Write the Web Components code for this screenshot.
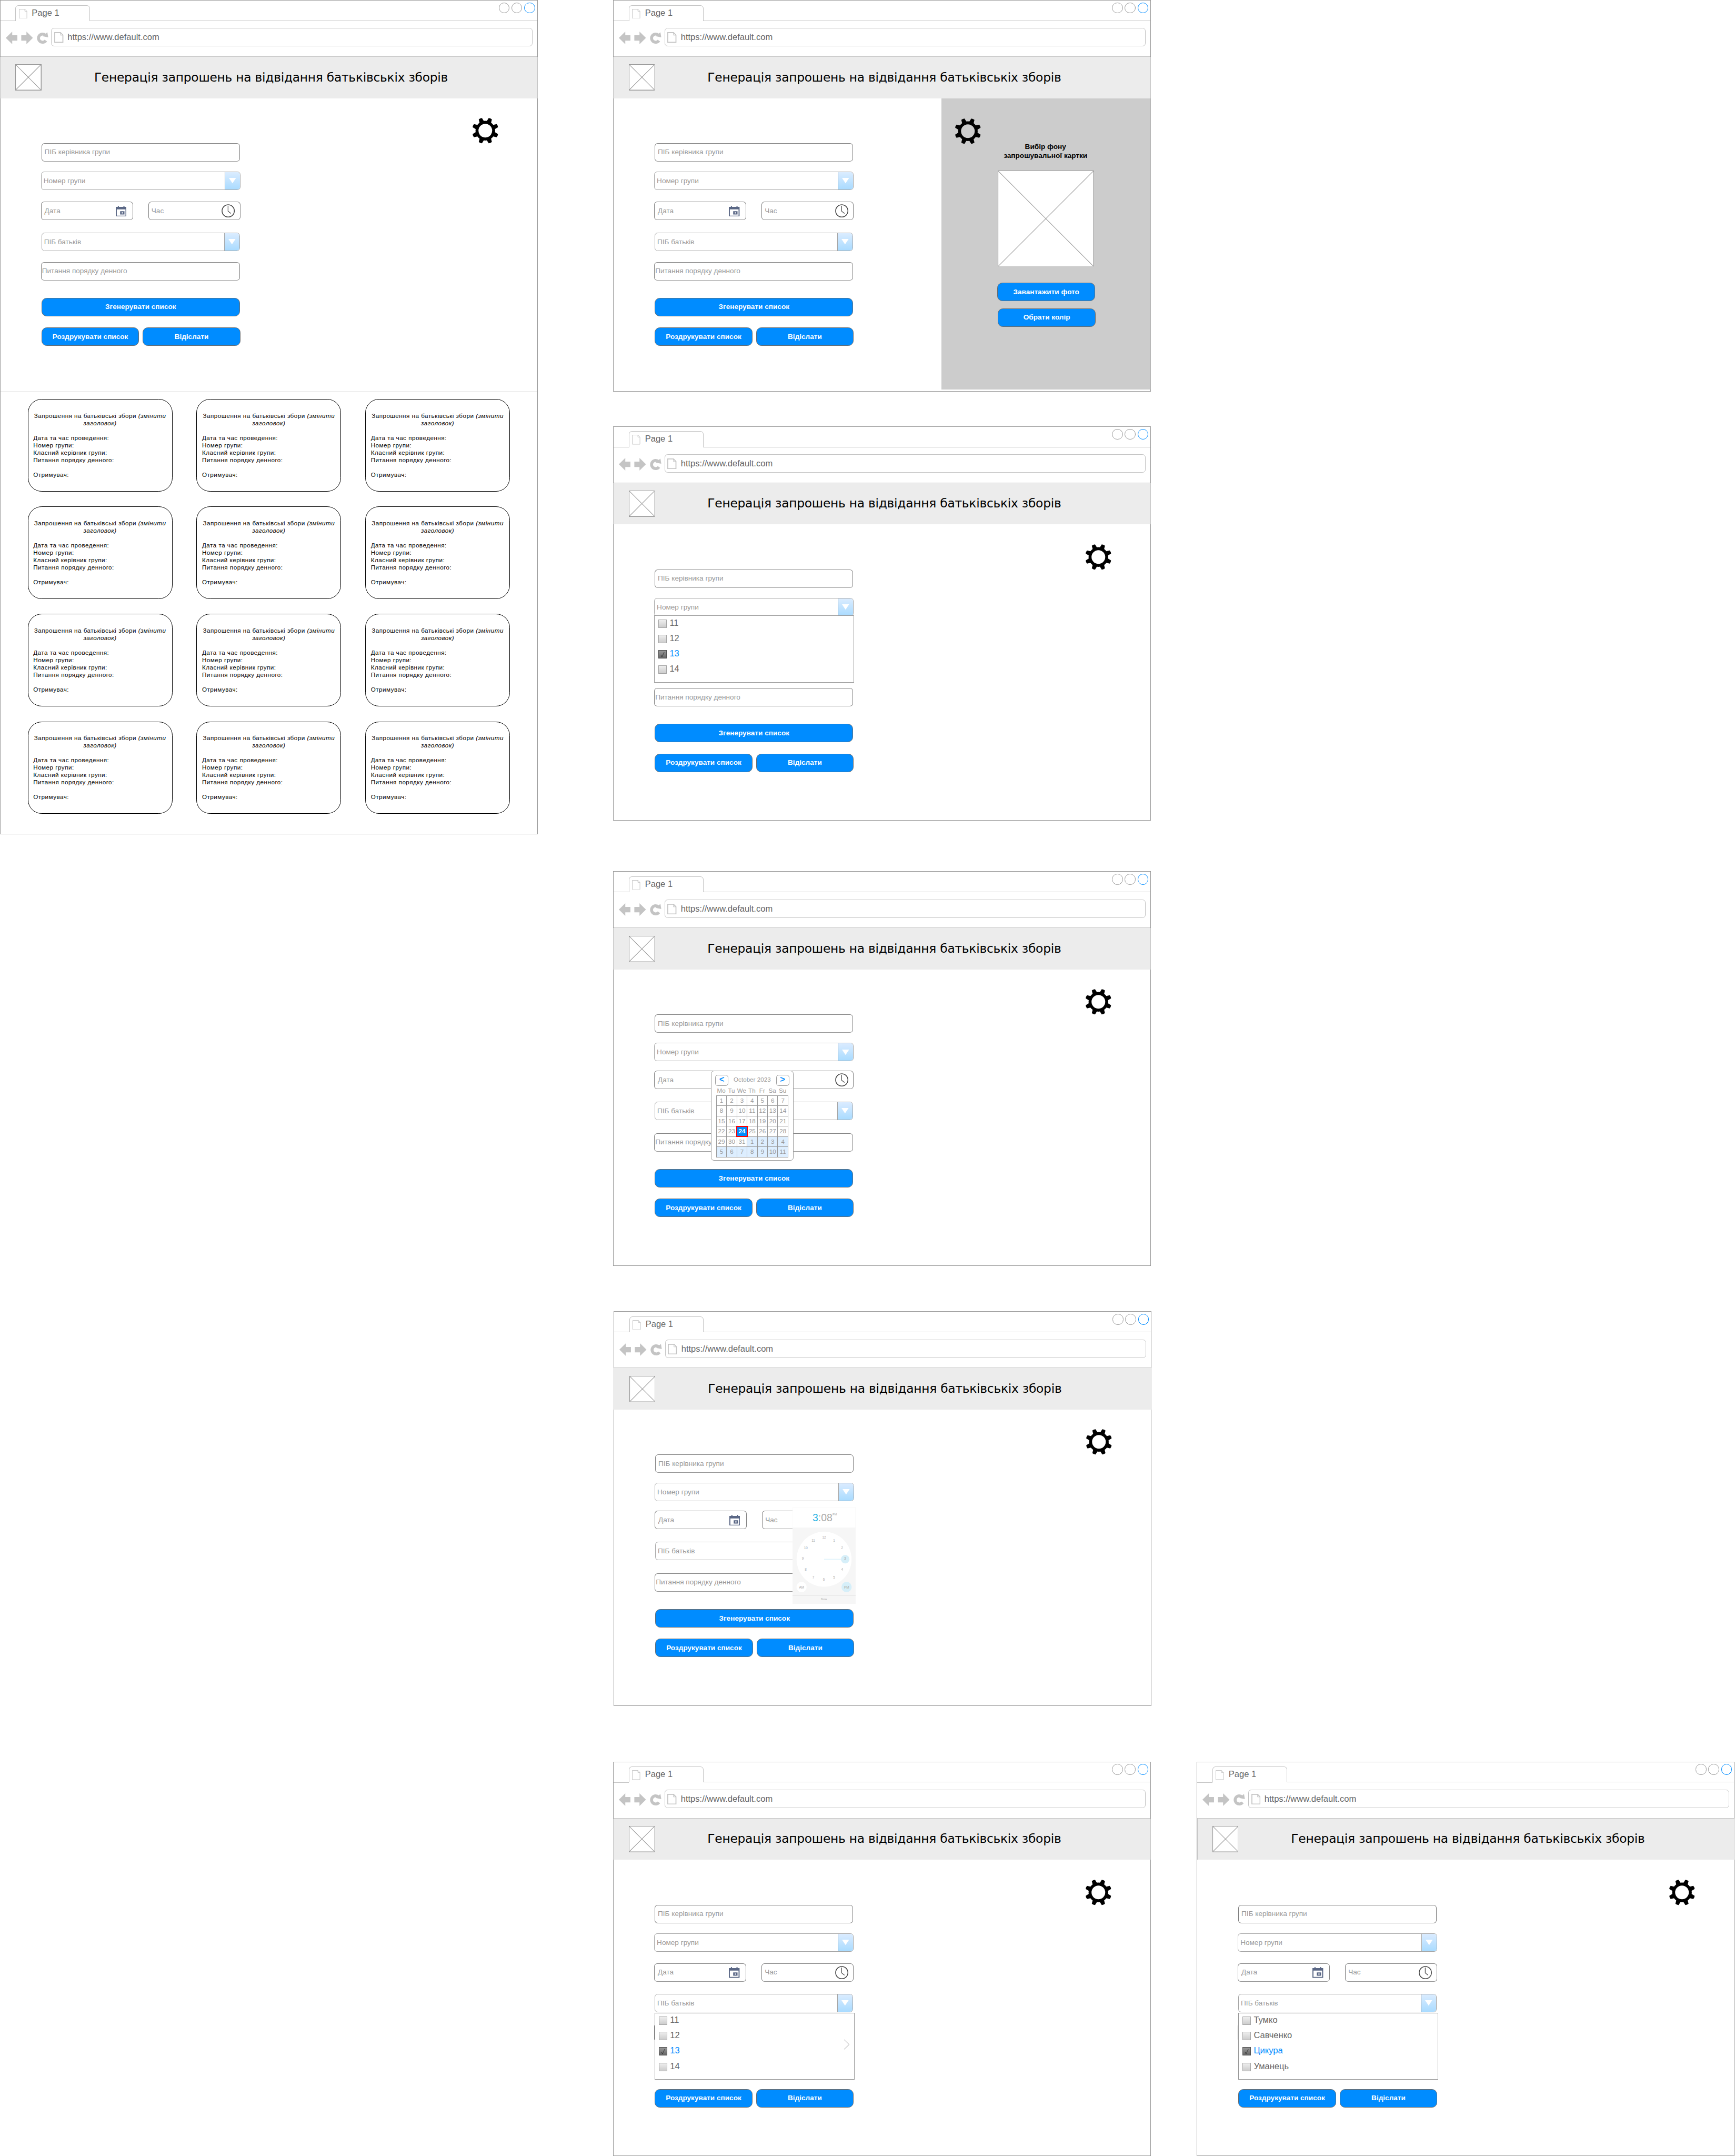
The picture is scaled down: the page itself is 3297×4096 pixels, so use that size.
<!DOCTYPE html>
<html lang="uk">
<head>
<meta charset="utf-8">
<title>Генерація запрошень</title>
<style>
html,body{margin:0;padding:0;background:#fff;overflow:hidden}
wire-board{zoom:.972}
</style>
</head>
<body>
<wire-board></wire-board>
<script>
const def=(name,render)=>customElements.define(name,class extends HTMLElement{
  connectedCallback(){
    if(this.shadowRoot)return;
    this.attachShadow({mode:'open'}).innerHTML=render(this);
  }
});
const BASE='*{box-sizing:border-box}:host{box-sizing:border-box;font-family:"Liberation Sans",Arial,sans-serif}';

/* crossed placeholder picture */
def('image-stub',el=>`<style>${BASE}
:host{display:block;width:${el.getAttribute('size')}px;height:${el.getAttribute('size')}px;flex:none}
svg{display:block;width:100%;height:100%}</style>
<svg viewBox="0 0 100 100" preserveAspectRatio="none"><rect width="100" height="100" fill="#fff"/><g fill="none" stroke="#999" stroke-width="1.1"><path vector-effect="non-scaling-stroke" d="M0 0L100 100M100 0L0 100"/></g><rect width="100" height="100" fill="none" stroke="#999" stroke-width="2.2" vector-effect="non-scaling-stroke"/></svg>`);

def('gear-icon',()=>{
  const teeth=[22.5,67.5,112.5,157.5,202.5,247.5,292.5,337.5].map(a=>`<path transform="rotate(${a})" d="M-4.6 -17.5L-3.4 -25.4Q0 -26.6 3.4 -25.4L4.6 -17.5Z"/>`).join('');
  return `<style>:host{display:block;width:54px;height:54px}svg{display:block}</style>
<svg width="54" height="54" viewBox="-27 -27 54 54"><circle r="16.3" fill="none" stroke="#000" stroke-width="5.8"/>${teeth}</svg>`;
});

/* browser window */
def('mock-window',el=>`<style>${BASE}
:host{display:flex;flex-direction:column;width:1051px;height:${el.getAttribute('height')}px;border:1px solid #999;background:#fff;position:absolute;left:${el.getAttribute('x')}px;top:${el.getAttribute('y')}px;color:#666}
.strip{display:flex;align-items:flex-end;height:40px;flex:none}
.lead{width:29px;height:1px;background:#c4c4c4}
.tab{width:146px;height:31px;border:1px solid #c4c4c4;border-bottom:0;border-radius:6px 6px 0 0;display:flex;padding:6px 0 0 6px;gap:9px;font-size:17px;line-height:19px}
.tab span{margin-top:-1px}
.rest{flex:1;height:40px;border-bottom:1px solid #c4c4c4;display:flex;justify-content:flex-end;gap:4px;padding:4px 4px 0 0}
.rest i{width:21px;height:21px;border:1px solid #999;border-radius:50%}
.rest i:last-child{border-color:#008cff}
.tools{height:70px;flex:none;border-bottom:1px solid #c4c4c4;display:flex;padding:14px 9px 0 9px}
.tools>svg{flex:none;display:block}
.url{flex:1;height:36px;border:1px solid #c4c4c4;border-radius:6px;display:flex;padding:7px 0 0 5px;gap:8px;font-size:17px;line-height:20px}
.head{height:81px;flex:none;margin:0 -1px;border:solid #c4c4c4;border-width:0 1px;background:#ececec;display:flex;align-items:center;padding-left:29px;color:#000}
.head span{font:24px/30px "DejaVu Sans",sans-serif;margin:-2px 0 0 103px;white-space:nowrap;letter-spacing:-.24px}
.body{flex:1;display:flex;flex-direction:column;position:relative;min-height:0}
</style>
<div class="strip"><div class="lead"></div><div class="tab"><svg width="16" height="19" viewBox="0 0 16 19" fill="none" stroke="#c4c4c4"><path d="M.5.5H11.5L15.5 4.5V18.5H.5ZM11.5.5V4.5H15.5"/></svg><span>Page 1</span></div><div class="rest"><i></i><i></i><i></i></div></div>
<div class="tools"><svg width="90" height="36" viewBox="10 55 90 36" fill="#c4c4c4"><path d="M11 74.5L23.6 62.3V69.3H33.6V80H23.6V86.8ZM64 74.5L51.4 62.3V69.3H41.3V80H51.4V86.8Z"/><path fill="none" stroke="#c4c4c4" stroke-width="5.8" d="M88.6 69.4A8 8 0 1 0 89.4 79.8"/><path d="M92.3 63.5L94 73.6L82.8 71.3Z"/></svg>
<div class="url"><svg width="18" height="21" viewBox="0 0 18 21" fill="none" stroke="#c4c4c4" stroke-width="1.8"><path d="M1 1H12.2L17 5.8V20H1Z"/><path stroke-width="1" d="M12 1.5V6H16.5"/></svg><span>https://www.default.com</span></div></div>
<div class="head"><image-stub size="51"></image-stub><span>Генерація запрошень на відвідання батьківськіх зборів</span></div>
<div class="body"><slot></slot></div>`);

def('text-field',el=>{
  const icon={
    date:'<svg width="21" height="21" viewBox="0 0 21 21"><path fill="#5a6785" d="M0 2H4V0H6V2H15V0H17V2H21V21H0ZM2 7V19.2H19V7Z" fill-rule="evenodd"/><path fill="#5a6785" fill-rule="evenodd" d="M8.5 10.5H17V17H8.5ZM11.6 12.5V15H14V12.5Z"/></svg>',
    time:'<svg width="26" height="26" viewBox="-13 -13 26 26" fill="none" stroke="#444"><circle r="12" stroke-width="1.6"/><path stroke-width="1.2" d="M-.3 -10V.5L5.3 5"/></svg>'
  }[el.getAttribute('icon')]||'';
  return `<style>${BASE}
:host{display:flex;align-items:center;justify-content:space-between;height:36px;border:1px solid #808080;border-bottom-color:#999;border-radius:6px;background:#fff;font-size:14px;line-height:16px;color:#999;padding:0 9.5px 0 var(--pad,5px);white-space:nowrap}
span{margin-top:-1px}
svg{display:block}</style><span><slot></slot></span>${icon}`;
});

def('select-field',()=>`<style>${BASE}
:host{display:flex;align-items:stretch;justify-content:space-between;height:36px;border:1px solid #a6a6a6;border-radius:6px;background:#fff;font-size:14px;line-height:34px;color:#999;padding-left:var(--pad,4px);overflow:hidden;white-space:nowrap}
.b{width:30px;border-left:1px solid #a6a6a6;background:linear-gradient(#dbecff,#a9dbff);display:flex;align-items:center;justify-content:center}</style>
<slot></slot><div class="b"><svg width="14" height="11" viewBox="0 0 14 11"><path fill="#fff" d="M0 0H14L7 10.5Z"/></svg></div>`);

def('blue-button',()=>`<style>${BASE}
:host{display:flex;align-items:center;justify-content:center;height:36px;border:1px solid #6b6b6b;border-radius:10px;background:#008cff;color:#fff;font-size:14px;font-weight:bold;line-height:16px;white-space:nowrap}</style><slot></slot>`);

/* state: which overlay is open; what it fully covers is not painted */
def('invite-form',el=>{
  const state=el.getAttribute('state');
  const agenda={date:'Питання порядку',parents:''}[state]??'Питання порядку денного';
  return `<style>${BASE}
:host{display:flex;flex-direction:column;margin:88px 0 0 79px;width:391px;flex:none}
:host([state=date]),:host([state=time]){--g3:18.5px;--g5:26px}
:host([state=group]) .r3,:host([state=group]) .f4,:host([state=parents]) .gen{visibility:hidden}
.i{margin-left:1px;width:388px}
.s{width:390px}
.f5{width:389px}
.r{display:flex;width:390px;justify-content:space-between}
.r text-field{width:180px}
.bt{margin:22px 0 0 1px;width:389px}
.bt blue-button{width:191px}</style>
<text-field class="i">ПІБ керівника групи</text-field>
<select-field class="s" style="margin-top:19.5px">Номер групи</select-field>
<div class="r r3" style="margin-top:var(--g3,23px)"><text-field icon="date" style="--pad:6px;padding-right:12px">Дата</text-field><text-field icon="time">${state=='date'?'':'Час'}</text-field></div>
<select-field class="i f4" style="margin-top:24px">ПІБ батьків</select-field>
<text-field class="f5" style="margin-top:var(--g5,21.5px);--pad:1px">${agenda}</text-field>
<blue-button class="i gen" style="margin-top:34px">Згенерувати список</blue-button>
<div class="r bt"><blue-button>Роздрукувати список</blue-button><blue-button>Відіслати</blue-button></div>`;
});

def('check-list',el=>{
  const items=el.getAttribute('items').split(',');
  return `<style>${BASE}
:host{display:flex;flex-direction:column;gap:14px;position:absolute;width:391px;height:131px;border:1px solid #999;background:#fff;padding:6.5px 0 0 7px;font-size:17px;line-height:16px;color:#666}
.row{display:flex;gap:6px;height:16px}
.row i{width:16px;height:16.5px;border:1px solid #a3a3a3;background:linear-gradient(#eee,#ccc);flex:none}
.row span{margin-top:-1px}
.on{color:#008cff}
.on i{border-color:#4d4d4d;background:linear-gradient(#999,#666)}
.on svg{display:block}
.chev{position:absolute;right:9px;top:51px}</style>
${items.map((t,n)=>`<div class="row ${n==2?'on':''}"><i>${n==2?'<svg width="14" height="15" viewBox="0 0 14 15"><path fill="none" stroke="#333" d="M4 8.5L6 12.5L10.5 3"/></svg>':''}</i><span>${t}</span></div>`).join('')}
${el.hasAttribute('more')?'<svg class="chev" width="12" height="21" viewBox="0 0 12 21"><path fill="none" stroke="#c4c4c4" stroke-width="1.1" d="M1 1L11 10.5L1 20"/></svg>':''}`;
});

def('month-popup',()=>{
  const d=[];for(let n=1;n<=31;n++)d.push(n);for(let n=1;n<=11;n++)d.push(n);
  return `<style>${BASE}
:host{display:flex;flex-direction:column;position:absolute;width:161px;height:176px;border:1px solid #999;border-radius:6px;background:#fff;font-size:12px;color:#999;padding:7px 7px 0 7px}
.top{display:flex;justify-content:space-between;height:21px;line-height:19px}
.top b{width:26px;height:21px;border:1px solid #999;border-radius:5px;color:#008cff;font-size:17px;line-height:17px;text-align:center}
.wk,.g{display:grid;grid-template-columns:repeat(7,20px);margin-left:2px;text-align:center;white-space:nowrap}
.wk{line-height:19px;height:19px}
.wk span{display:flex;justify-content:center}
.g{grid-auto-rows:20px;border:solid #999;border-width:1px 0 0 1px;width:141px}
.g span{border:solid #999;border-width:0 1px 1px 0;line-height:18px;display:flex;justify-content:center}
.g .n{background:#ddeeff}
.g .c{background:#008cff;color:#fff;font-weight:bold;border:2.1px solid #f00;margin:-1.5px -.5px -.5px -1.5px;line-height:17px;z-index:1}</style>
<div class="top"><b>&lt;</b><span>October 2023</span><b>&gt;</b></div>
<div class="wk">${['Mo','Tu','We','Th','Fr','Sa','Su'].map(t=>`<span>${t}</span>`).join('')}</div>
<div class="g">${d.map((n,k)=>`<span class="${k>30?'n':k==23?'c':''}">${n}</span>`).join('')}</div>`;
});

def('clock-popup',()=>{
  const p=[[61.7,62.9],[81.3,68.7],[97,83],[102.7,104],[97,125],[81.3,141],[61.3,145],[40.7,141],[25.7,125],[20,104],[26,83],[40.7,69]];
  return `<style>${BASE}
:host{display:block;position:absolute;width:124px;height:190px;background:#f6f6f6}
.t{height:41px;background:#fff;border:solid #fafafa;border-width:1px 1px 0;display:flex;justify-content:center;padding-left:3px;font-size:20px;line-height:41px;color:#aaa}
.t b{font-weight:normal;color:#33b5e5}
.t small{font-size:6px;line-height:28px}
svg{display:block}</style>
<div class="t"><b>3</b><span>:08</span><small>PM</small></div>
<svg width="124" height="149" viewBox="0 41 124 149" font-family="Liberation Sans" font-size="6.6" fill="#aaa" text-anchor="middle">
<circle cx="61.7" cy="103" r="53.7" fill="#fff"/><path d="M61.7 103H95" stroke="#e3f4fb" stroke-width="1.8"/><circle cx="103" cy="103" r="8.3" fill="#d6eff9"/>
<circle cx="17.7" cy="157.3" r="10" fill="#fff"/><circle cx="105.7" cy="157.3" r="10" fill="#d6eff9"/>
${p.map((c,n)=>`<text x="${c[0]}" y="${c[1]}">${n||12}</text>`).join('')}
<text x="17.7" y="160">AM</text><text x="105.7" y="160">PM</text>
<path d="M0 173.3H124" stroke="#ddd"/><text x="61.5" y="182.7" font-size="5">Done</text></svg>`;
});

def('settings-panel',()=>`<style>${BASE}
:host{display:flex;flex-direction:column;width:409px;height:569px;background:#ccc;border-right:1px solid #b3b3b3;margin:0 -1px 0 auto}
gear-icon{margin:37px 0 0 24px}
p{margin:-4px 0 0;width:406px;text-align:center;font-size:14px;line-height:17px;font-weight:bold;color:#000}
image-stub{margin:20px 0 0 110px}
blue-button{width:191px;margin:31.5px 0 0 109px}
blue-button+blue-button{margin:14px 0 0 110px}</style>
<gear-icon></gear-icon><p>Вибір фону<br>запрошувальної картки</p><image-stub size="188"></image-stub>
<blue-button>Завантажити фото</blue-button><blue-button>Обрати колір</blue-button>`);

def('invite-card',()=>`<style>${BASE}
:host{display:block;width:283px;height:181px;border:1px solid #000;border-radius:27px;padding:24.5px 5px 0 10px;font-size:12px;line-height:14.4px;color:#000;white-space:nowrap;letter-spacing:.5px}
.c{text-align:center;margin-left:-5px}p{margin:0}.g{margin-top:14.4px}</style>
<p class="c">Запрошення на батьківські збори <em>(змінити<br>заголовок)</em></p>
<p class="g">Дата та час проведення:</p><p>Номер групи:</p><p>Класний керівник групи:</p><p>Питання порядку денного:</p><p class="g">Отримувач:</p>`);

def('card-grid',()=>`<style>${BASE}
:host{display:grid;grid-template-columns:repeat(3,283px);column-gap:47px;row-gap:29px;padding:14px 0 0 53px;border-top:1px solid #c4c4c4;flex:1;align-content:start}</style>
${'<invite-card></invite-card>'.repeat(12)}`);

/* upper part of a page: form on the left, gear or settings on the right */
def('page-top',el=>`<style>${BASE}
:host{display:flex;align-items:flex-start;${el.getAttribute('h')?`height:${el.getAttribute('h')}px;flex:none;`:'flex:1;'}}
.gear{margin:36.5px 0 0 auto;padding-right:74.5px}</style>
<invite-form state="${el.getAttribute('state')||''}"></invite-form>
${el.hasAttribute('panel')?'<settings-panel></settings-panel>':'<div class="gear"><gear-icon></gear-icon></div>'}`);

def('wire-board',()=>`<style>:host{display:block;position:relative;width:3392px;height:4214px;background:#fff;overflow:hidden}</style>
<mock-window x="0" y="0" height="1631"><page-top h="573"></page-top><card-grid></card-grid></mock-window>
<mock-window x="1199" y="0" height="765"><page-top panel></page-top></mock-window>
<mock-window x="1199" y="833" height="771"><page-top state="group"></page-top><check-list items="11,12,13,14" style="left:79px;top:178px"></check-list></mock-window>
<mock-window x="1199" y="1703" height="771"><page-top state="date"></page-top><month-popup style="left:190px;top:198px"></month-popup></mock-window>
<mock-window x="1200" y="2563" height="771"><page-top state="time"></page-top><clock-popup style="left:348px;top:190px"></clock-popup></mock-window>
<mock-window x="1199" y="3443" height="771"><page-top state="parents"></page-top><check-list items="11,12,13,14" more style="left:80px;top:299px"></check-list></mock-window>
<mock-window x="2340" y="3443" height="771"><page-top state="parents"></page-top><check-list items="Тумко,Савченко,Цикура,Уманець" style="left:80px;top:299px"></check-list></mock-window>`);
</script>
</body>
</html>
